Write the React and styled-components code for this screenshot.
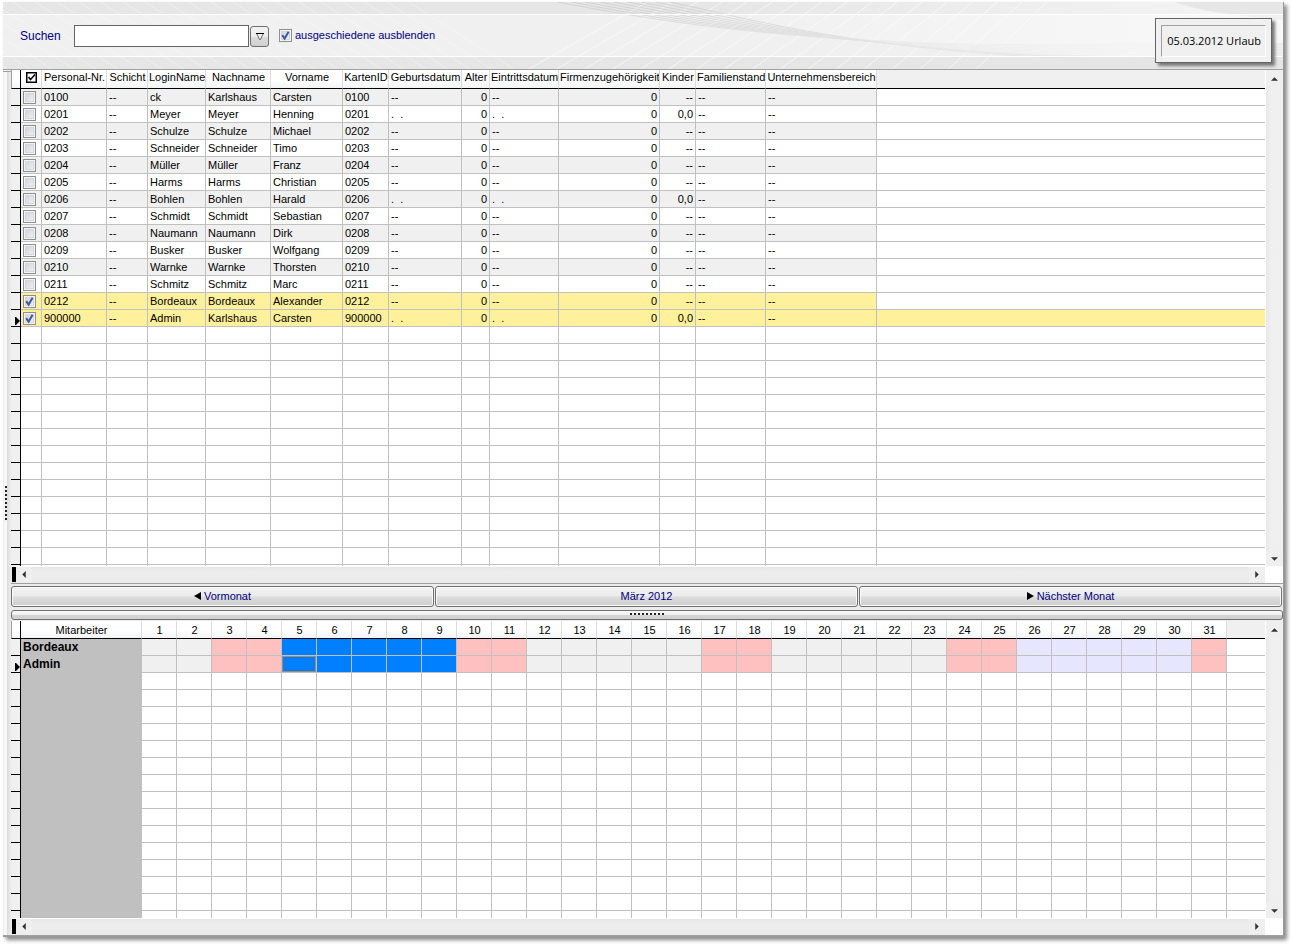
import React, { useState } from "react";
import styled, { createGlobalStyle, css } from "styled-components";

const GlobalStyle = createGlobalStyle`
  * {
    box-sizing: border-box;
  }

  body {
    margin: 0;
    padding: 2px 8px 9px 3px;
    background: #fff;
    color: #000;
    font-family: "Liberation Sans", Arial, sans-serif;
    font-size: 11px;
  }

  button, input {
    font: inherit;
    margin: 0;
    padding: 0;
  }
`;

const Window = styled.div`
  background: #f0f0f0;
  border-right: 1px solid #9a9a9a;
  border-bottom: 1px solid #9a9a9a;
  box-shadow: 3px 3px 4px #888;
`;

/* toolbar */

const Header = styled.header`
  position: relative;
  display: flex;
  align-items: flex-start;
  height: 68px;
  padding: 16px 11px 0 17px;
  border-bottom: 1px solid #a0a0a0;
`;

const Backdrop = styled.svg`
  position: absolute;
  inset: 0;
  width: 100%;
  height: 100%;
`;

const SearchForm = styled.form`
  position: relative;
  display: flex;
  flex: 1;
  align-items: flex-start;
  padding-top: 7px;
  color: #000080;
`;

const SearchLabel = styled.label`
  width: 54px;
  font-size: 12px;
  line-height: 22px;
`;

const SearchInput = styled.input`
  width: 175px;
  height: 22px;
  padding: 0 3px;
  border: 1px solid #646464;
  border-radius: 0;
  background: #fff;
  outline: none;
`;

const FilterButton = styled.button`
  display: grid;
  place-items: center;
  width: 19px;
  height: 21px;
  margin: 1px 10px 0 1px;
  border: 1px solid #707070;
  border-radius: 3px;
  background: linear-gradient(#f2f2f2, #ebebeb 50%, #dddddd 50%, #cfcfcf);
`;

const HideLabel = styled.label`
  display: flex;
  align-items: center;
  gap: 3px;
  height: 20px;
`;

const Callout = styled.aside`
  position: relative;
  padding: 6px 5px 5px 5px;
  border: 1px solid #646464;
  background: #f0f0f0;
  box-shadow: 3px 3px 3px #777;
`;

const CalloutText = styled.div`
  padding: 0 4px 0 5px;
  border: 1px solid #a0a0a0;
  border-right-color: #fff;
  border-bottom-color: #fff;
  font-family: "Open Sans", "Noto Sans", sans-serif;
  font-size: 11px;
  line-height: 30px;
  white-space: nowrap;
`;

/* check boxes */

const CheckFrame = styled.span`
  display: inline-grid;
  width: 13px;
  height: 13px;

  > * {
    grid-area: 1 / 1;
  }
`;

const CheckInput = styled.input`
  appearance: none;
  width: 13px;
  height: 13px;
  border: 1px solid #8e8f8f;
  background: linear-gradient(135deg, #cbcfd5, #f6f6f6);
  box-shadow: inset 0 0 0 1px #f4f4f4, inset 0 0 0 2px #d4d8dd;
`;

const CheckMark = styled.svg`
  width: 13px;
  height: 13px;
  pointer-events: none;
`;

const Check = (props) => (
  <CheckFrame>
    <CheckInput type="checkbox" {...props} />
    {props.checked && (
      <CheckMark viewBox="0 0 13 13">
        <path d="M3.2 6.2 L5.6 9.6 L9.6 2.8" fill="none" stroke="#3f5a9c" strokeWidth="2" />
      </CheckMark>
    )}
  </CheckFrame>
);

/* frame around the two grids */

const Body = styled.main`
  display: flex;
`;

const SideSplitter = styled.div`
  display: flex;
  flex: none;
  align-items: center;
  justify-content: flex-start;
  width: 8px;
  margin-top: 1px;
  padding-left: 2px;
  border: 1px solid #a0a0a0;
  border-width: 1px 0;
  background: linear-gradient(90deg, #ececec, #fafafa 30%, #f4f4f4 50%, #dcdcdc 50%, #ececec);
`;

const SideGrip = styled.div`
  width: 2px;
  height: 35px;
  background: repeating-linear-gradient(#222 0 2px, #eee 2px 4px);
`;

const Panels = styled.div`
  flex: 1;
  min-width: 0;
  background: #ececec;
`;

const GridPanel = styled.section`
  display: grid;
  grid-template-columns: 1fr 18px;
  border-bottom: 1px solid #a0a0a0;
`;

const GridView = styled.div`
  height: ${(p) => p.$height}px;
  overflow: hidden;
  background: #f0f0f0;
`;

const Table = styled.table`
  width: 100%;
  table-layout: fixed;
  border-spacing: 0;
  background: #fff;
`;

const HeadCell = styled.th`
  height: ${(p) => p.$height}px;
  padding: 0 0 4px 1px;
  border-right: 1px solid #dcdcdc;
  border-bottom: 1px solid #000;
  background: linear-gradient(#fff 50%, #f2f4f6);
  font-weight: normal;
  line-height: 14px;
  white-space: nowrap;
  overflow: hidden;

  ${(p) => p.$low && css`
    padding-bottom: 0;
  `}

  ${(p) => p.$indicator && css`
    border-left: 1px solid #a0a0a0;
    border-right-color: #000;
  `}

  ${(p) => p.$rest && css`
    border-right: 0;
    background: #f0f0f0;
  `}
`;

const Cell = styled.td`
  height: 17px;
  padding: 0 2px;
  border-right: 1px solid #c0c0c0;
  border-bottom: 1px solid #c0c0c0;
  background: ${(p) => p.$fill || "#fff"};
  line-height: 16px;
  text-align: ${(p) => p.$align || "left"};
  white-space: pre;
  overflow: hidden;

  &:last-child {
    border-right: 0;
  }
`;

const CheckCell = styled(Cell)`
  line-height: 0;
  vertical-align: middle;
`;

const Indicator = styled.td`
  height: 17px;
  padding: 0;
  border-right: 1px solid #000;
  border-bottom: 1px solid #000;
  background: #f0f0f0;
  line-height: 0;
  text-align: right;
  vertical-align: bottom;
`;

const NameCell = styled(Cell)`
  padding: 0 2px;
  border-color: #c0c0c0;
  background: #c0c0c0;
  font-size: 12px;
  font-weight: bold;
`;

const DayCell = styled(Cell)`
  padding: 0;
  ${(p) => p.$current && css`
    box-shadow: inset 0 0 0 1px #4d9cf0, inset 0 0 0 2px #666;
  `}
`;

/* scroll bars */

const VBar = styled.div`
  display: flex;
  flex-direction: column;
  justify-content: space-between;
  padding: 1px 1px 0 0;
  border-left: 1px solid #fff;
  background: linear-gradient(90deg, #e8e8e8, #f0f0f0 30%, #efefef);
`;

const HBar = styled.div`
  display: flex;
  align-items: flex-start;
  height: 17px;
  padding-left: 1px;
  border-top: 1px solid #fff;
  background: linear-gradient(#e6e6e6, #ededed 30%, #ebebeb);
`;

const SplitBox = styled.div`
  width: 4px;
  height: 15px;
  background: #000;
`;

const ScrollButton = styled.button`
  display: grid;
  place-items: center;
  width: 16px;
  height: 15px;
  border: 0;
  background: #efefef;
`;

const Spacer = styled.div`
  flex: 1;
`;

const Corner = styled.div`
  background: #fff;
`;

/* month navigation */

const MonthBar = styled.nav`
  display: grid;
  grid-template-columns: repeat(3, 1fr);
  gap: 1px;
  padding: 2px 1px 3px 0;
`;

const MonthButton = styled.button`
  display: flex;
  align-items: center;
  justify-content: center;
  gap: 3px;
  height: 21px;
  padding-bottom: 2px;
  border: 1px solid #707070;
  border-radius: 3px;
  background: linear-gradient(#f3f3f3, #ebebeb 45%, #dcdcdc 55%, #cdcdcd);
  box-shadow: inset 0 0 0 1px #fafafa;
  color: #000080;
`;

const BottomSplitter = styled.div`
  display: flex;
  align-items: flex-start;
  justify-content: center;
  height: 10px;
  margin-bottom: 1px;
  padding-top: 2px;
  border: 1px solid #707070;
  border-radius: 3px;
  background: linear-gradient(#f8f8f8, #f0f0f0 45%, #d4d4d4 55%, #d0d0d0);
`;

const BottomGrip = styled.div`
  width: 35px;
  height: 2px;
  background: repeating-linear-gradient(90deg, #222 0 2px, #eee 2px 4px);
`;

const arrowPaths = {
  up: "M0 4 L4 0 L8 4 Z",
  down: "M0 0 L4 4 L8 0 Z",
  left: "M4 0 L0 4 L4 8 Z",
  right: "M0 0 L4 4 L0 8 Z",
};

const Arrow = ({ dir }) => {
  const flat = dir === "up" || dir === "down";
  return (
    <svg width={flat ? 7 : 4} height={flat ? 4 : 7} viewBox={flat ? "0 0 8 4" : "0 0 4 8"}>
      <path d={arrowPaths[dir]} fill="#333" />
    </svg>
  );
};

const RowPointer = () => (
  <svg width="5" height="10" viewBox="0 0 5 10">
    <path d="M0 1 H1 L5 5 L1 9 H0 Z" fill="#000" />
  </svg>
);

const columns = [
  { title: "Personal-Nr.", width: 65 },
  { title: "Schicht", width: 41 },
  { title: "LoginName", width: 58 },
  { title: "Nachname", width: 65 },
  { title: "Vorname", width: 72 },
  { title: "KartenID", width: 46 },
  { title: "Geburtsdatum", width: 73 },
  { title: "Alter", width: 28, align: "right" },
  { title: "Eintrittsdatum", width: 69 },
  { title: "Firmenzugehörigkeit", width: 101, align: "right" },
  { title: "Kinder", width: 36, align: "right" },
  { title: "Familienstand", width: 70 },
  { title: "Unternehmensbereich", width: 111 },
];

// nr, login, last name, first name, has stored dates
const people = [
  ["0100", "ck", "Karlshaus", "Carsten", false],
  ["0201", "Meyer", "Meyer", "Henning", true],
  ["0202", "Schulze", "Schulze", "Michael", false],
  ["0203", "Schneider", "Schneider", "Timo", false],
  ["0204", "Müller", "Müller", "Franz", false],
  ["0205", "Harms", "Harms", "Christian", false],
  ["0206", "Bohlen", "Bohlen", "Harald", true],
  ["0207", "Schmidt", "Schmidt", "Sebastian", false],
  ["0208", "Naumann", "Naumann", "Dirk", false],
  ["0209", "Busker", "Busker", "Wolfgang", false],
  ["0210", "Warnke", "Warnke", "Thorsten", false],
  ["0211", "Schmitz", "Schmitz", "Marc", false],
  ["0212", "Bordeaux", "Bordeaux", "Alexander", false],
  ["900000", "Admin", "Karlshaus", "Carsten", true],
];

const toCells = ([nr, login, last, first, dates]) => {
  const date = dates ? ".  ." : "--";
  return [nr, "--", login, last, first, nr, date, "0", date, "0", dates ? "0,0" : "--", "--", "--"];
};

const days = Array.from({ length: 31 }, (_, i) => i + 1);
const weekend = [3, 4, 10, 11, 17, 18, 24, 25, 31];

const dayFill = (day) => {
  if (weekend.includes(day)) return "#ffc0c0";
  if (day >= 5 && day <= 9) return "#0080ff";
  if (day >= 26 && day <= 30) return "#e6e6ff";
  return "#f0f0f0";
};

const range = (count) => Array.from({ length: count }, (_, i) => i);

const HeaderBackdrop = () => (
  <Backdrop viewBox="0 0 1281 67" preserveAspectRatio="none">
    <defs>
      <linearGradient id="glow">
        <stop offset="0" stopColor="#fff" stopOpacity="0" />
        <stop offset="1" stopColor="#fff" stopOpacity="0.6" />
      </linearGradient>
      <linearGradient id="mesh">
        <stop offset="0" stopColor="#c4c4c4" />
        <stop offset="0.4" stopColor="#e0e0e0" />
        <stop offset="1" stopColor="#e6e6e6" />
      </linearGradient>
    </defs>
    <rect width="1281" height="67" fill="#f0f0f0" />
    <rect width="1281" height="12" fill="#e6e6e6" />
    <rect y="55" width="1281" height="12" fill="#e6e6e6" />
    <g stroke="#fff" opacity="0.35">
      {range(24).map((i) => (
        <path key={i} d={`M${i * 22 - 100} 0 L${i * 22 + 5} 67`} />
      ))}
    </g>
    <g stroke="#fff" opacity="0.6">
      {range(17).map((i) => (
        <path key={i} d={`M${i * 25 + 645} 0 L${i * 25 + 526 + i * 3} 67`} />
      ))}
    </g>
    <g fill="none" stroke="url(#mesh)" opacity="0.6">
      {range(9).map((i) => (
        <path key={i} d={`M${555 + i * 14} 0 C${700 + i * 8} ${28 - i} 900 ${56 + i} 1281 ${36 + i * 3}`} />
      ))}
    </g>
    <path d="M700 0 C800 35 940 54 1140 54 C1200 54 1250 46 1281 40 V18 C1240 14 1200 10 1173 0 Z" fill="url(#glow)" />
    <rect y="12" width="1281" height="1" fill="#fff" />
    <rect y="54" width="1281" height="1" fill="#fff" />
  </Backdrop>
);

const VScroll = () => (
  <VBar>
    <ScrollButton aria-label="Nach oben"><Arrow dir="up" /></ScrollButton>
    <ScrollButton aria-label="Nach unten"><Arrow dir="down" /></ScrollButton>
  </VBar>
);

const HScroll = () => (
  <HBar>
    <SplitBox />
    <ScrollButton aria-label="Nach links"><Arrow dir="left" /></ScrollButton>
    <Spacer />
    <ScrollButton aria-label="Nach rechts"><Arrow dir="right" /></ScrollButton>
  </HBar>
);

const StaffTable = () => {
  const [selected, setSelected] = useState(["0212", "900000"]);

  const toggle = (nr) => {
    setSelected(selected.includes(nr) ? selected.filter((s) => s !== nr) : [...selected, nr]);
  };

  return (
    <Table>
      <colgroup>
        <col style={{ width: 10 }} />
        <col style={{ width: 21 }} />
        {columns.map((c) => <col key={c.title} style={{ width: c.width }} />)}
        <col />
      </colgroup>
      <thead>
        <tr>
          <HeadCell $height={19} $indicator />
          <HeadCell $height={19} $low>
            <svg width="11" height="11" viewBox="0 0 11 11">
              <rect x="0.75" y="0.75" width="9.5" height="9.5" fill="#fff" stroke="#000" strokeWidth="1.5" />
              <path d="M2.5 5 L4.5 7.5 L9 2.5" fill="none" stroke="#000" strokeWidth="1.5" />
            </svg>
          </HeadCell>
          {columns.map((c) => <HeadCell key={c.title} $height={19}>{c.title}</HeadCell>)}
          <HeadCell $height={19} $rest />
        </tr>
      </thead>
      <tbody>
        {people.map((person, i) => {
          const nr = person[0];
          const current = i === people.length - 1;
          const checked = selected.includes(nr);
          const fill = checked ? "#fff09c" : i % 2 ? "#fff" : "#f0f0f0";
          return (
            <tr key={nr}>
              <Indicator>{current && <RowPointer />}</Indicator>
              <CheckCell $fill={fill}>
                <Check checked={checked} onChange={() => toggle(nr)} aria-label={nr} />
              </CheckCell>
              {toCells(person).map((text, n) => (
                <Cell key={n} $fill={fill} $align={columns[n].align}>{text}</Cell>
              ))}
              <Cell $fill={current ? fill : "#fff"} />
            </tr>
          );
        })}
        {range(15).map((i) => (
          <tr key={i}>
            <Indicator />
            <Cell />
            {columns.map((c) => <Cell key={c.title} />)}
            <Cell />
          </tr>
        ))}
      </tbody>
    </Table>
  );
};

const MonthTable = () => (
  <Table>
    <colgroup>
      <col style={{ width: 10 }} />
      <col style={{ width: 121 }} />
      {days.map((d) => <col key={d} style={{ width: 35 }} />)}
      <col />
    </colgroup>
    <thead>
      <tr>
        <HeadCell $height={18} $low $indicator />
        <HeadCell $height={18} $low>Mitarbeiter</HeadCell>
        {days.map((d) => <HeadCell key={d} $height={18} $low>{d}</HeadCell>)}
        <HeadCell $height={18} $low $rest />
      </tr>
    </thead>
    <tbody>
      {["Bordeaux", "Admin"].map((name, i) => (
        <tr key={name}>
          <Indicator>{i === 1 && <RowPointer />}</Indicator>
          <NameCell>{name}</NameCell>
          {days.map((d) => <DayCell key={d} $fill={dayFill(d)} $current={i === 1 && d === 5} />)}
          <Cell />
        </tr>
      ))}
      {range(15).map((i) => (
        <tr key={i}>
          <Indicator />
          <NameCell />
          {days.map((d) => <DayCell key={d} />)}
          <Cell />
        </tr>
      ))}
    </tbody>
  </Table>
);

const App = () => {
  const [search, setSearch] = useState("");
  const [hideLeft, setHideLeft] = useState(true);

  return (
    <>
      <GlobalStyle />
      <Window>
        <Header>
          <HeaderBackdrop />
          <SearchForm onSubmit={(e) => e.preventDefault()}>
            <SearchLabel htmlFor="search">Suchen</SearchLabel>
            <SearchInput id="search" value={search} onChange={(e) => setSearch(e.target.value)} />
            <FilterButton type="button" aria-label="Filter">
              <svg width="8" height="7" viewBox="0 0 8 7">
                <path d="M0 0.5 H8" stroke="#000" />
                <path d="M1 1 L3.5 6.5 H4.5 L7 1" fill="#f4f4f4" stroke="#444" strokeWidth="0.8" />
              </svg>
            </FilterButton>
            <HideLabel>
              <Check checked={hideLeft} onChange={(e) => setHideLeft(e.target.checked)} />
              ausgeschiedene ausblenden
            </HideLabel>
          </SearchForm>
          <Callout>
            <CalloutText>05.03.2012 Urlaub</CalloutText>
          </Callout>
        </Header>
        <Body>
          <SideSplitter><SideGrip /></SideSplitter>
          <Panels>
            <GridPanel>
              <GridView $height={496}><StaffTable /></GridView>
              <VScroll />
              <HScroll />
              <Corner />
            </GridPanel>
            <MonthBar>
              <MonthButton>
                <svg width="7" height="8" viewBox="0 0 7 8"><path d="M7 0 V8 L0 4 Z" /></svg>
                Vormonat
              </MonthButton>
              <MonthButton>März 2012</MonthButton>
              <MonthButton>
                <svg width="7" height="8" viewBox="0 0 7 8"><path d="M0 0 L7 4 L0 8 Z" /></svg>
                Nächster Monat
              </MonthButton>
            </MonthBar>
            <BottomSplitter><BottomGrip /></BottomSplitter>
            <GridPanel>
              <GridView $height={297}><MonthTable /></GridView>
              <VScroll />
              <HScroll />
              <Corner />
            </GridPanel>
          </Panels>
        </Body>
      </Window>
    </>
  );
};

export default App;
